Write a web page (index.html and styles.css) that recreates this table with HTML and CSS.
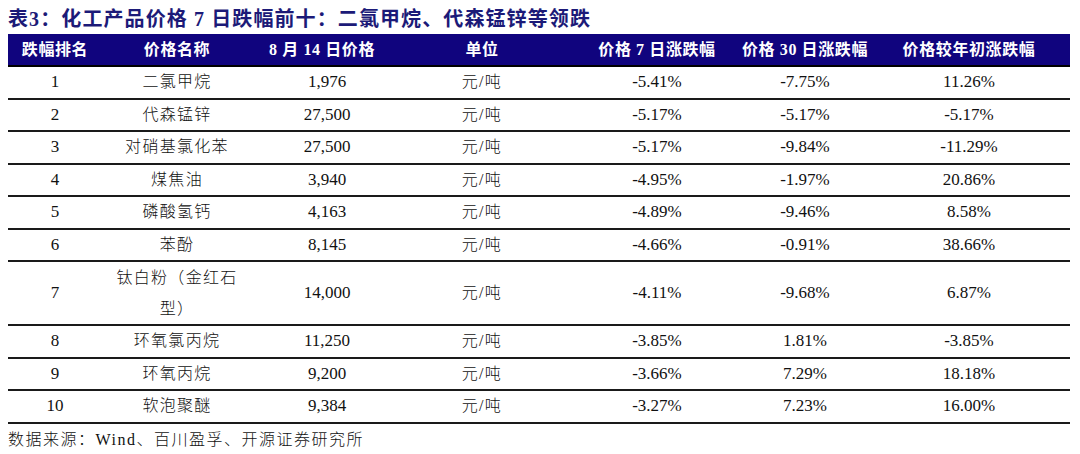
FILE: index.html
```html
<!DOCTYPE html>
<html lang="zh">
<head>
<meta charset="utf-8">
<link rel="stylesheet" href="styles.css">
<title>表3</title>
</head>
<body>
<div class="title">表3：化工产品价格 7 日跌幅前十：二氯甲烷、代森锰锌等领跌</div>
<table class="data">
  <colgroup>
    <col class="c1"><col class="c2"><col class="c3"><col class="c4"><col class="c5"><col class="c6"><col class="c7">
  </colgroup>
  <thead>
    <tr>
      <th>跌幅排名</th><th>价格名称</th><th>8 月 14 日价格</th><th>单位</th><th>价格 7 日涨跌幅</th><th>价格 30 日涨跌幅</th><th>价格较年初涨跌幅</th>
    </tr>
  </thead>
  <tbody>
    <tr><td>1</td><td class="cn">二氯甲烷</td><td class="price">1,976</td><td class="cn">元/吨</td><td>-5.41%</td><td>-7.75%</td><td>11.26%</td></tr>
    <tr><td>2</td><td class="cn">代森锰锌</td><td class="price">27,500</td><td class="cn">元/吨</td><td>-5.17%</td><td>-5.17%</td><td>-5.17%</td></tr>
    <tr><td>3</td><td class="cn">对硝基氯化苯</td><td class="price">27,500</td><td class="cn">元/吨</td><td>-5.17%</td><td>-9.84%</td><td>-11.29%</td></tr>
    <tr><td>4</td><td class="cn">煤焦油</td><td class="price">3,940</td><td class="cn">元/吨</td><td>-4.95%</td><td>-1.97%</td><td>20.86%</td></tr>
    <tr><td>5</td><td class="cn">磷酸氢钙</td><td class="price">4,163</td><td class="cn">元/吨</td><td>-4.89%</td><td>-9.46%</td><td>8.58%</td></tr>
    <tr><td>6</td><td class="cn">苯酚</td><td class="price">8,145</td><td class="cn">元/吨</td><td>-4.66%</td><td>-0.91%</td><td>38.66%</td></tr>
    <tr><td>7</td><td class="cn wrap">钛白粉（金红石型）</td><td class="price">14,000</td><td class="cn">元/吨</td><td>-4.11%</td><td>-9.68%</td><td>6.87%</td></tr>
    <tr><td>8</td><td class="cn">环氧氯丙烷</td><td class="price">11,250</td><td class="cn">元/吨</td><td>-3.85%</td><td>1.81%</td><td>-3.85%</td></tr>
    <tr><td>9</td><td class="cn">环氧丙烷</td><td class="price">9,200</td><td class="cn">元/吨</td><td>-3.66%</td><td>7.29%</td><td>18.18%</td></tr>
    <tr><td>10</td><td class="cn">软泡聚醚</td><td class="price">9,384</td><td class="cn">元/吨</td><td>-3.27%</td><td>7.23%</td><td>16.00%</td></tr>
  </tbody>
</table>
<div class="source">数据来源：Wind、百川盈孚、开源证券研究所</div>
</body>
</html>
```

FILE: styles.css
```css
html, body {
  margin: 0;
  padding: 0;
  background: #ffffff;
}
body {
  padding: 8px 0 0 8px;
  font-family: "Liberation Serif", "Noto Sans CJK SC", serif;
  color: #111111;
}
.title {
  font-size: 20px;
  line-height: 22px;
  height: 22px;
  font-weight: 700;
  letter-spacing: 1.1px;
  color: #1c1a78;
  margin-bottom: 4px;
  white-space: nowrap;
}
.data {
  width: 1062px;
  table-layout: fixed;
  border-collapse: separate;
  border-spacing: 0;
}
.c1 { width: 94px; }
.c2 { width: 150px; }
.c3 { width: 140px; }
.c4 { width: 180px; }
.c5 { width: 170px; }
.c6 { width: 126px; }
.c7 { width: 202px; }
.data th {
  background: #10047e;
  color: #ffffff;
  font-size: 16px;
  font-weight: 700;
  letter-spacing: 0.6px;
  line-height: 31px;
  padding: 0;
  text-align: center;
  border-bottom: 2px solid #000000;
  white-space: nowrap;
}
.data td {
  font-size: 17px;
  line-height: 30.5px;
  padding: 0;
  text-align: center;
  border-bottom: 2px solid #1a1a1a;
  vertical-align: middle;
}
.data td.cn {
  font-size: 16px;
  letter-spacing: 1.3px;
  font-weight: 300;
}
.data td.wrap {
  line-height: 31px;
  padding: 0 12px;
}
.data td.price {
  padding-left: 10px;
}
.source {
  margin-top: 6px;
  font-size: 16px;
  line-height: 20px;
  letter-spacing: 1.5px;
  font-weight: 300;
  color: #111111;
}
```
